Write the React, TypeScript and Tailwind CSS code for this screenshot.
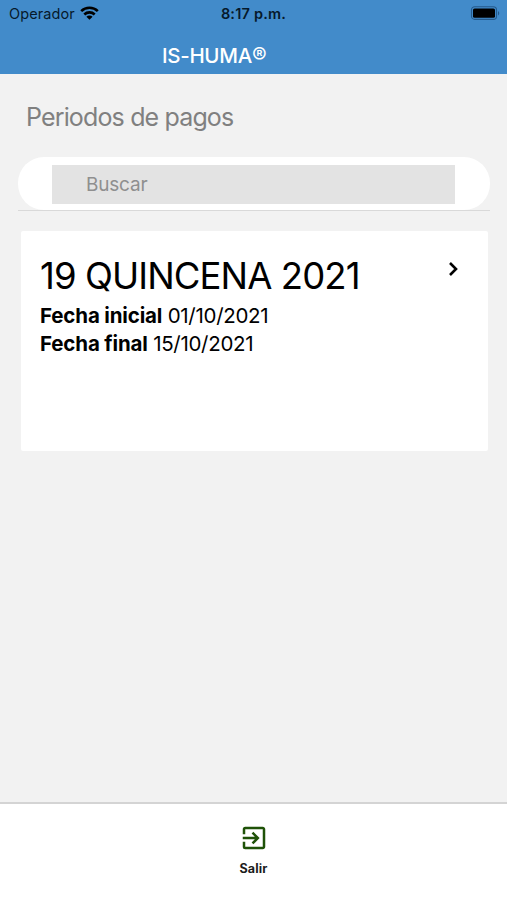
import React from "react";
import { MdExitToApp } from "react-icons/md";

function StatusBar() {
  return (
    <div className="grid h-7 grid-cols-[1fr_auto_1fr] items-center pr-[7px] pl-[7px] text-[#06192b]">
      <div className="flex items-center gap-[5px] pl-[2px]">
        <span className="text-[14.5px] leading-7 tracking-[0.1px]">Operador</span>
        <svg viewBox="0 0 19 14" className="mb-[2px] h-[14px] w-[19px]" fill="none" stroke="#000" strokeWidth="2.6">
          <path d="M1.2 5.1C5.8.6 13.2.6 17.8 5.1" />
          <path d="M4.3 8.5C7.2 5.7 11.8 5.7 14.7 8.5" />
          <path d="M9.5 13.8 6.4 10.7C8.1 9.1 10.9 9.1 12.6 10.7Z" fill="#000" stroke="none" />
        </svg>
      </div>
      <span className="text-center text-[14.5px] leading-7 font-semibold whitespace-nowrap tracking-[0.2px]">8:17 p.m.</span>
      <svg viewBox="0 0 30 14" className="mb-[2px] h-[14px] w-[30px] justify-self-end">
        <rect x="1.5" y="0.8" width="25" height="12.6" rx="3.2" fill="none" stroke="#245a8c" strokeWidth="1.1" />
        <rect x="3" y="2.4" width="22" height="9.4" rx="1.6" fill="#000" />
        <path d="M28 5v4.4c1.7-.7 1.7-3.7 0-4.4Z" fill="#245a8c" />
      </svg>
    </div>
  );
}

export default function App() {
  return (
    <div className="flex h-[900px] w-[507px] flex-col overflow-hidden bg-[#f2f2f2] font-[Inter,sans-serif]">
      <header className="h-[74px] shrink-0 bg-[#428bca]">
        <StatusBar />
        <h1 className="mt-[12px] pl-[162px] text-[20.5px] leading-[30px] font-medium tracking-[-0.3px] text-white">
          IS-HUMA<span className="text-[22px] font-normal">®</span>
        </h1>
      </header>

      <main className="flex-1">
        <h2 className="pt-[27px] pl-[26px] text-[25px] leading-8 tracking-[-0.85px] text-[#808080]">Periodos de pagos</h2>
        <div className="mr-[17px] ml-[18px] mt-6 border-b border-[#d9d9d9]">
          <div className="h-[53px] rounded-[26px] bg-white pt-[8px] pr-[35px] pl-[34px]">
            <div className="flex h-[39px] items-center bg-[#e3e3e3] pt-[2px] pl-[34px] text-[19px] tracking-[-0.2px] text-[#8f8f8f]">Buscar</div>
          </div>
        </div>
        <section className="mt-[20px] mr-[19px] ml-[21px] flex h-[220px] justify-between rounded-[2px] bg-white pt-[24px] pr-[29px] pl-[19px] text-black">
          <div>
            <h3 className="pt-px text-[36.5px] leading-10 tracking-[-0.9px]">19 QUINCENA 2021</h3>
            <p className="mt-[6px] text-[20.5px] leading-7 tracking-[-0.3px]"><b className="font-bold tracking-[-0.15px]">Fecha inicial</b> 01/10/2021</p>
            <p className="text-[20.5px] leading-7 tracking-[-0.3px]"><b className="font-bold tracking-[-0.15px]">Fecha final</b> 15/10/2021</p>
          </div>
          <svg viewBox="0 0 11 16" className="mt-[6px] h-4 w-[11px]" fill="none" stroke="#000" strokeWidth="2.6">
            <path d="m2 2 6 6-6 6" />
          </svg>
        </section>
      </main>

      <footer className="flex h-[98px] shrink-0 flex-col items-center border-t-2 border-[#d4d4d4] bg-white pt-[19px]">
        <MdExitToApp className="size-[30px] text-[#1f5208]" />
        <span className="mt-[6px] text-[12.5px] leading-[20px] font-bold tracking-[0.15px] text-[#1c1c1c]">Salir</span>
      </footer>
    </div>
  );
}
